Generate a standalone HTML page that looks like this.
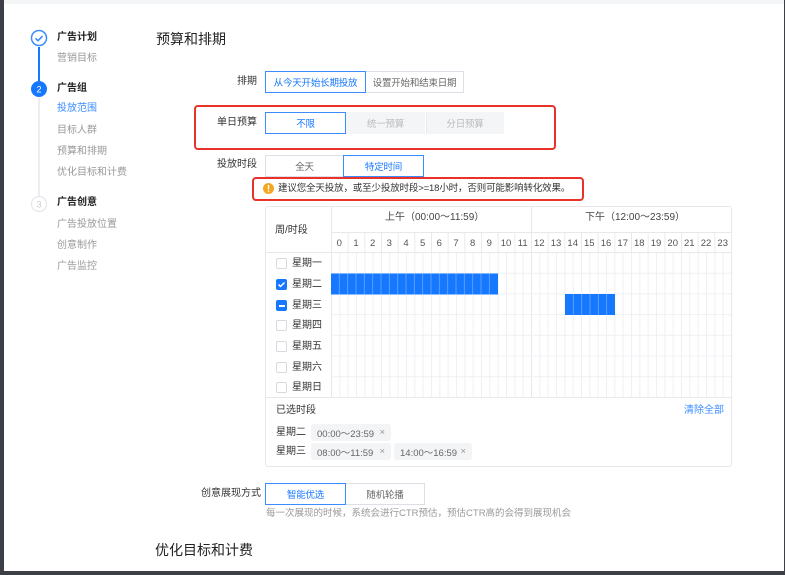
<!DOCTYPE html>
<html><head><meta charset="utf-8"><style>
*{margin:0;padding:0;box-sizing:border-box}
body{width:785px;height:575px;overflow:hidden;background:#3c3f46;font-family:"Liberation Sans","Noto Sans CJK SC",sans-serif;position:relative}
#pg{position:absolute;left:4px;top:0;width:780px;height:571px;background:#fff}
#top{position:absolute;left:4px;top:0;width:780px;height:4px;background:#f3f5f7}
.t{position:absolute;white-space:nowrap;line-height:1}
.s{font-size:10px;color:#999}
.b{font-size:10px;color:#222;font-weight:bold}
.lbl{font-size:10px;color:#333}
.btn{position:absolute;border:1px solid #dcdfe6;font-size:9.5px;color:#666;display:flex;align-items:center;justify-content:center;background:#fff;white-space:nowrap;letter-spacing:-0.2px}
.sel{border-color:#3a8cff;color:#1677ff;z-index:2}
.dis{background:#f4f5f7;border-color:#f4f5f7;color:#bbb}
.red{position:absolute;border:2px solid #e8322a;border-radius:4px}
.tag{position:absolute;background:#f3f4f6;border-radius:3px;font-size:9.5px;color:#666;display:flex;align-items:center;padding-left:6px;height:17px;white-space:nowrap}
.tag span{position:absolute;right:6px;color:#999}
.cb{position:absolute;width:11px;height:11px;border:1px solid #d6d9de;border-radius:2px;background:#fff}
</style></head><body>
<div id="pg"></div><div id="top"></div>

<svg style="position:absolute;left:0;top:0" width="60" height="220">
<line x1="39" y1="47" x2="39" y2="81" stroke="#1677ff" stroke-width="2"/>
<line x1="39" y1="98" x2="39" y2="196" stroke="#e4e7ec" stroke-width="1.5"/>
<circle cx="39" cy="38" r="7.5" fill="#fff" stroke="#3a8cff" stroke-width="1.5"/>
<path d="M35.5 38.3l2.5 2.4 4.5-4.6" fill="none" stroke="#3a8cff" stroke-width="1.6"/>
<circle cx="39" cy="89" r="8" fill="#1677ff"/>
<text x="39" y="92.5" font-size="9" fill="#fff" text-anchor="middle" font-family="Liberation Sans">2</text>
<circle cx="39" cy="204" r="7.5" fill="#fff" stroke="#e4e7ec" stroke-width="1.2"/>
<text x="39" y="207.5" font-size="9" fill="#ccc" text-anchor="middle" font-family="Liberation Sans">3</text>
</svg>
<div class="t b" style="left:57px;top:33px">广告计划</div>
<div class="t s" style="left:57px;top:54px">营销目标</div>
<div class="t b" style="left:57px;top:84px">广告组</div>
<div class="t s" style="left:57px;top:104px;color:#3a8cff">投放范围</div>
<div class="t s" style="left:57px;top:126px">目标人群</div>
<div class="t s" style="left:57px;top:147px">预算和排期</div>
<div class="t s" style="left:57px;top:168px">优化目标和计费</div>
<div class="t b" style="left:57px;top:198px">广告创意</div>
<div class="t s" style="left:57px;top:220px">广告投放位置</div>
<div class="t s" style="left:57px;top:241px">创意制作</div>
<div class="t s" style="left:57px;top:262px">广告监控</div>

<div class="t" style="left:156px;top:32px;font-size:14px;color:#222">预算和排期</div>

<div class="t lbl" style="left:237px;top:77px">排期</div>
<div class="btn sel" style="left:265px;top:71px;width:101px;height:22px">从今天开始长期投放</div>
<div class="btn" style="left:365px;top:71px;width:99px;height:22px">设置开始和结束日期</div>

<div class="red" style="left:194px;top:105px;width:362px;height:45px"></div>
<div class="t lbl" style="left:217px;top:118px">单日预算</div>
<div class="btn sel" style="left:265px;top:112px;width:81px;height:22px">不限</div>
<div class="btn dis" style="left:346px;top:112px;width:79px;height:22px">统一预算</div>
<div class="btn dis" style="left:426px;top:112px;width:78px;height:22px;border-left:1px solid #e8eaed">分日预算</div>

<div class="t lbl" style="left:217px;top:160px">投放时段</div>
<div class="btn" style="left:265px;top:155px;width:79px;height:22px">全天</div>
<div class="btn sel" style="left:343px;top:155px;width:81px;height:22px">特定时间</div>

<div class="red" style="left:252px;top:177px;width:332px;height:24px;z-index:3"></div>
<svg style="position:absolute;left:262px;top:182px" width="13" height="13"><circle cx="6.5" cy="6.5" r="5.5" fill="#f5a623"/><rect x="5.8" y="3" width="1.4" height="4.4" fill="#fff"/><rect x="5.8" y="8.4" width="1.4" height="1.4" fill="#fff"/></svg>
<div class="t" style="left:278px;top:184px;font-size:9.5px;color:#333;letter-spacing:-0.15px">建议您全天投放，或至少投放时段&gt;=18小时，否则可能影响转化效果。</div>

<div style="position:absolute;left:265px;top:206px;width:467px;height:261px;border:1px solid #e6e8eb;border-radius:3px"></div>
<svg style="position:absolute;left:265px;top:206px" width="467" height="262">
<defs>
<pattern id="v" x="66" y="0" width="8.333" height="10" patternUnits="userSpaceOnUse"><line x1="0.5" y1="0" x2="0.5" y2="10" stroke="#eef0f3" stroke-width="1"/></pattern>
<pattern id="v2" x="66" y="0" width="16.667" height="10" patternUnits="userSpaceOnUse"><line x1="0.5" y1="0" x2="0.5" y2="10" stroke="#e8eaed" stroke-width="1"/></pattern>
</defs>
<rect x="66" y="46" width="400" height="145" fill="url(#v)"/>
<rect x="66" y="26" width="400" height="20" fill="url(#v2)"/>
<line x1="66.5" y1="0" x2="66.5" y2="191" stroke="#e6e8eb"/>
<line x1="266.5" y1="0" x2="266.5" y2="191" stroke="#e6e8eb"/>
<line x1="66" y1="26.5" x2="466" y2="26.5" stroke="#e6e8eb"/>
<line x1="0" y1="46.5" x2="466" y2="46.5" stroke="#e6e8eb"/>
<g stroke="#eef0f3">
<line x1="66" y1="67.2" x2="466" y2="67.2"/><line x1="66" y1="87.9" x2="466" y2="87.9"/><line x1="66" y1="108.6" x2="466" y2="108.6"/><line x1="66" y1="129.3" x2="466" y2="129.3"/><line x1="66" y1="150" x2="466" y2="150"/><line x1="66" y1="170.7" x2="466" y2="170.7"/>
</g>
<line x1="0" y1="191.5" x2="466" y2="191.5" stroke="#e6e8eb"/>
<rect x="66" y="67.5" width="167" height="21" fill="#1677ff"/>
<rect x="300" y="88" width="50" height="21" fill="#1677ff"/>
<g stroke="#6aa8ff" stroke-width="0.8">
<line x1="74.3" y1="67.5" x2="74.3" y2="88.5"/><line x1="82.7" y1="67.5" x2="82.7" y2="88.5"/><line x1="91" y1="67.5" x2="91" y2="88.5"/><line x1="99.3" y1="67.5" x2="99.3" y2="88.5"/><line x1="107.7" y1="67.5" x2="107.7" y2="88.5"/><line x1="116" y1="67.5" x2="116" y2="88.5"/><line x1="124.3" y1="67.5" x2="124.3" y2="88.5"/><line x1="132.7" y1="67.5" x2="132.7" y2="88.5"/><line x1="141" y1="67.5" x2="141" y2="88.5"/><line x1="149.3" y1="67.5" x2="149.3" y2="88.5"/><line x1="157.7" y1="67.5" x2="157.7" y2="88.5"/><line x1="166" y1="67.5" x2="166" y2="88.5"/><line x1="174.3" y1="67.5" x2="174.3" y2="88.5"/><line x1="182.7" y1="67.5" x2="182.7" y2="88.5"/><line x1="191" y1="67.5" x2="191" y2="88.5"/><line x1="199.3" y1="67.5" x2="199.3" y2="88.5"/><line x1="207.7" y1="67.5" x2="207.7" y2="88.5"/><line x1="216" y1="67.5" x2="216" y2="88.5"/><line x1="224.3" y1="67.5" x2="224.3" y2="88.5"/>
<line x1="308.3" y1="88" x2="308.3" y2="109"/><line x1="316.7" y1="88" x2="316.7" y2="109"/><line x1="325" y1="88" x2="325" y2="109"/><line x1="333.3" y1="88" x2="333.3" y2="109"/><line x1="341.7" y1="88" x2="341.7" y2="109"/>
</g>
<g font-size="9.5" fill="#555" text-anchor="middle" font-family="Liberation Sans">
<text x="74.3" y="40">0</text><text x="91" y="40">1</text><text x="107.7" y="40">2</text><text x="124.3" y="40">3</text><text x="141" y="40">4</text><text x="157.7" y="40">5</text><text x="174.3" y="40">6</text><text x="191" y="40">7</text><text x="207.7" y="40">8</text><text x="224.3" y="40">9</text><text x="241" y="40">10</text><text x="257.7" y="40">11</text><text x="274.3" y="40">12</text><text x="291" y="40">13</text><text x="307.7" y="40">14</text><text x="324.3" y="40">15</text><text x="341" y="40">16</text><text x="357.7" y="40">17</text><text x="374.3" y="40">18</text><text x="391" y="40">19</text><text x="407.7" y="40">20</text><text x="424.3" y="40">21</text><text x="441" y="40">22</text><text x="457.7" y="40">23</text>
</g>
</svg>
<div class="t" style="left:385px;top:213px;font-size:10px;color:#444">上午（00:00～11:59）</div>
<div class="t" style="left:585px;top:213px;font-size:10px;color:#444">下午（12:00～23:59）</div>
<div class="t" style="left:275px;top:226px;font-size:10px;color:#333">周/时段</div>

<div class="cb" style="left:276px;top:258px"></div><div class="t lbl" style="left:292px;top:259px">星期一</div>
<div class="cb" style="left:276px;top:279px;background:#1677ff;border-color:#1677ff"></div>
<svg style="position:absolute;left:276px;top:279px" width="11" height="11"><path d="M2.5 5.5l2 2 4-4" fill="none" stroke="#fff" stroke-width="1.5"/></svg>
<div class="t lbl" style="left:292px;top:280px">星期二</div>
<div class="cb" style="left:276px;top:300px;background:#1677ff;border-color:#1677ff"></div>
<div style="position:absolute;left:279px;top:305px;width:6px;height:1.5px;background:#fff"></div>
<div class="t lbl" style="left:292px;top:301px">星期三</div>
<div class="cb" style="left:276px;top:320px"></div><div class="t lbl" style="left:292px;top:321px">星期四</div>
<div class="cb" style="left:276px;top:341px"></div><div class="t lbl" style="left:292px;top:342px">星期五</div>
<div class="cb" style="left:276px;top:362px"></div><div class="t lbl" style="left:292px;top:363px">星期六</div>
<div class="cb" style="left:276px;top:382px"></div><div class="t lbl" style="left:292px;top:383px">星期日</div>

<div class="t lbl" style="left:276px;top:406px">已选时段</div>
<div class="t" style="left:684px;top:406px;font-size:10px;color:#3a8cff">清除全部</div>
<div class="t lbl" style="left:276px;top:428px">星期二</div>
<div class="tag" style="left:311px;top:424px;width:80px">00:00～23:59<span>×</span></div>
<div class="t lbl" style="left:276px;top:447px">星期三</div>
<div class="tag" style="left:311px;top:443px;width:80px">08:00～11:59<span>×</span></div>
<div class="tag" style="left:394px;top:443px;width:78px">14:00～16:59<span>×</span></div>

<div class="t" style="left:201px;top:489px;font-size:10px;color:#333">创意展现方式</div>
<div class="btn sel" style="left:265px;top:483px;width:81px;height:22px">智能优选</div>
<div class="btn" style="left:345px;top:483px;width:80px;height:22px">随机轮播</div>
<div class="t" style="left:266px;top:509px;font-size:9.5px;color:#999">每一次展现的时候，系统会进行CTR预估，预估CTR高的会得到展现机会</div>

<div class="t" style="left:155px;top:543px;font-size:14px;color:#222">优化目标和计费</div>
</body></html>
